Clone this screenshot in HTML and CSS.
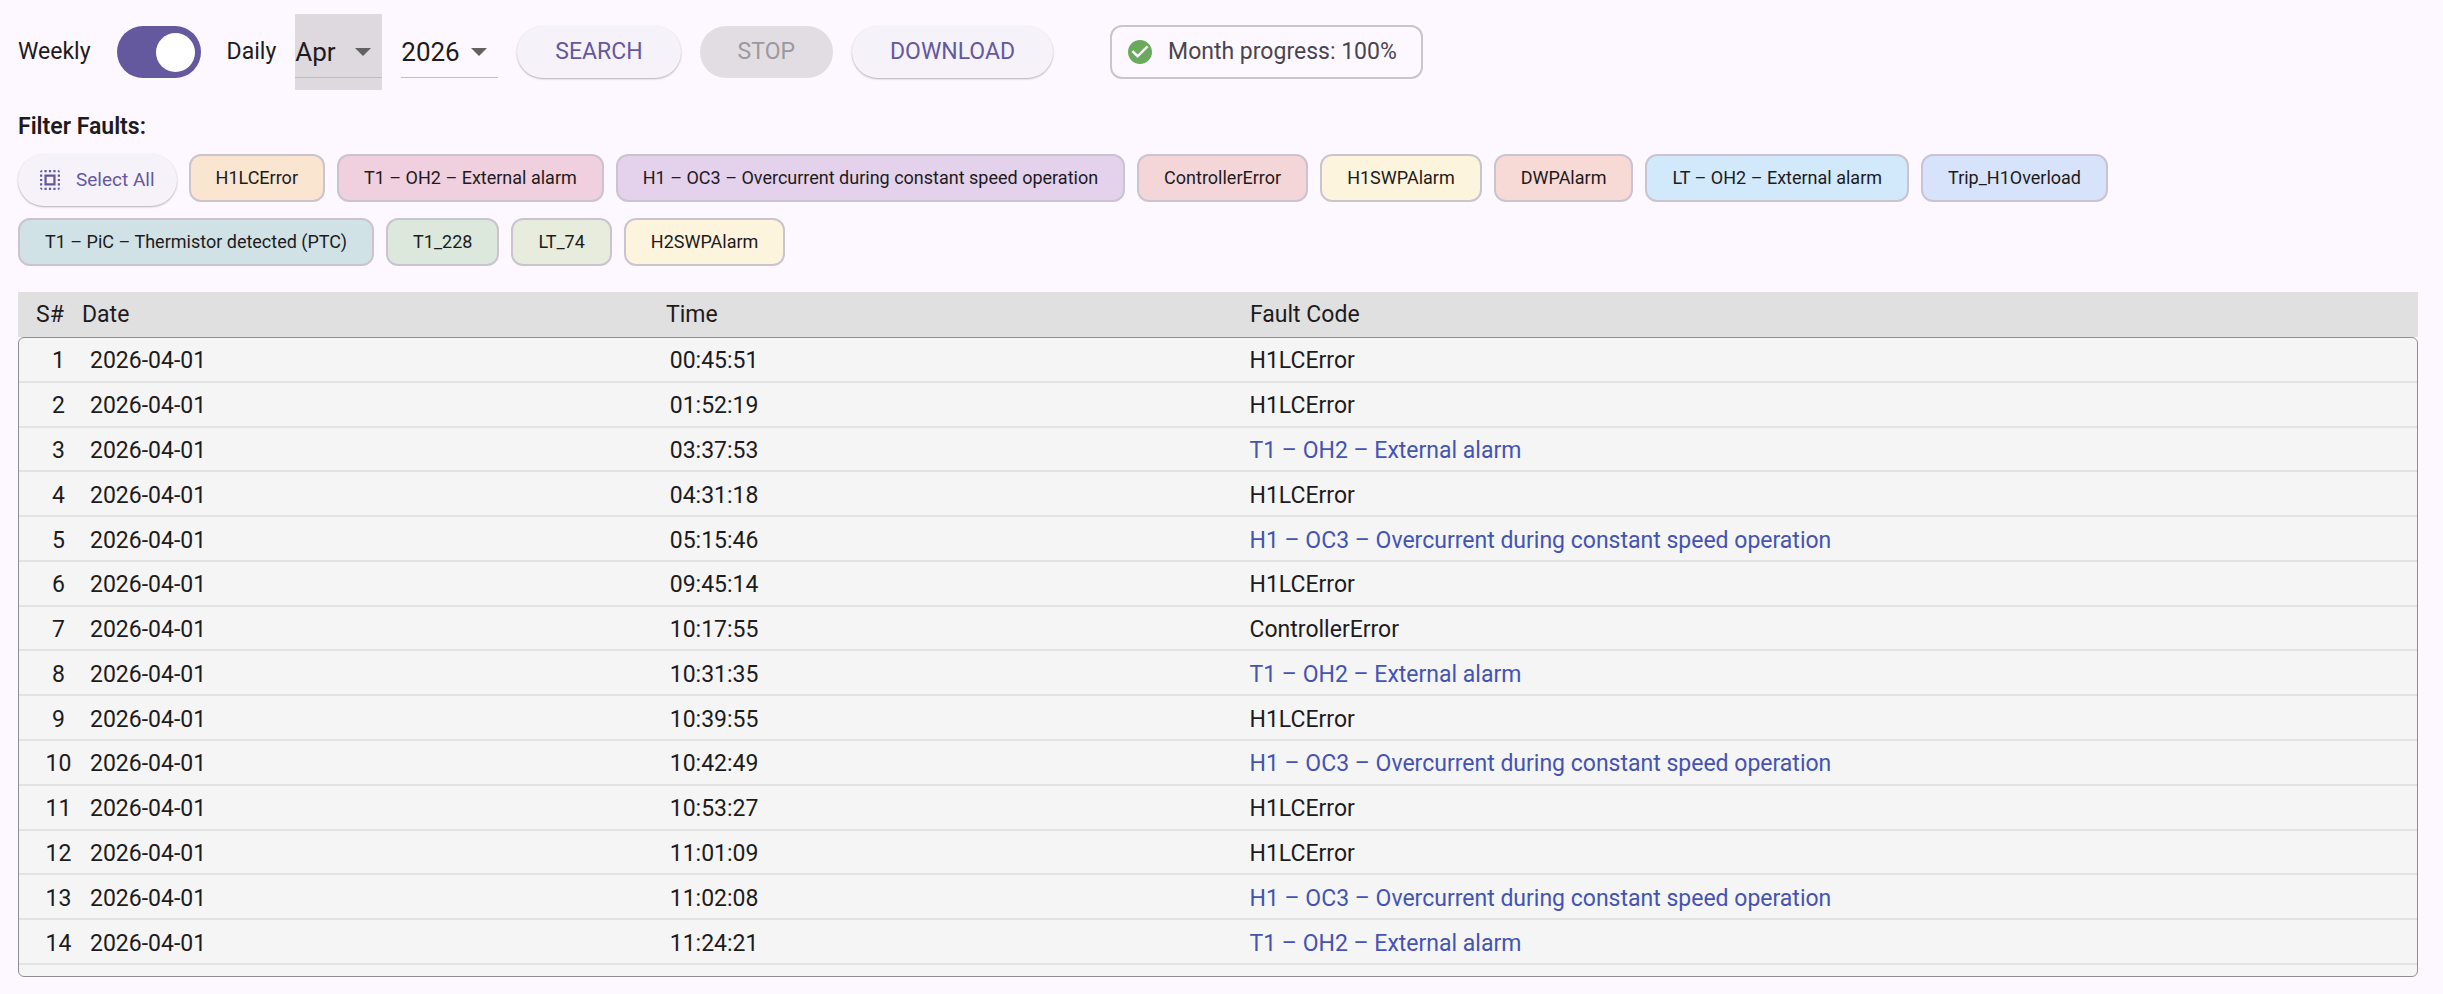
FILE: index.html
```html
<!DOCTYPE html>
<html lang="en">
<head>
<meta charset="utf-8">
<meta name="viewport" content="width=device-width, initial-scale=1">
<title>Fault Log</title>
<link rel="stylesheet" href="styles.css">
</head>
<body>
<main class="page">
  <form class="toolbar">
    <div class="mode">
      <label for="mode">Weekly</label>
      <input class="switch" type="checkbox" role="switch" id="mode" checked>
      <label for="mode">Daily</label>
    </div>
    <div class="picker picker-active">
      <select class="picker-select" aria-label="Month"><option>Apr</option></select>
      <svg class="picker-arrow" viewBox="0 0 16 8" aria-hidden="true"><path d="M0 0h16l-8 8z"/></svg>
    </div>
    <div class="picker picker-year">
      <select class="picker-select" aria-label="Year"><option>2026</option></select>
      <svg class="picker-arrow" viewBox="0 0 16 8" aria-hidden="true"><path d="M0 0h16l-8 8z"/></svg>
    </div>
    <button class="button" type="button">SEARCH</button>
    <button class="button" type="button" disabled>STOP</button>
    <button class="button" type="button">DOWNLOAD</button>
    <div class="status" role="status">
      <svg class="status-icon" viewBox="2 2 20 20" aria-hidden="true"><path d="M12 2C6.48 2 2 6.48 2 12s4.48 10 10 10 10-4.48 10-10S17.52 2 12 2zm-2 15l-5-5 1.41-1.41L10 14.17l7.59-7.59L19 8l-9 9z"/></svg>
      Month progress: 100%
    </div>
  </form>

  <h2 class="filter-title">Filter Faults:</h2>
  <div class="chips">
    <button class="select-all" type="button">
      <svg class="select-icon" viewBox="3 3 18 18" aria-hidden="true"><path d="M3 5h2V3c-1.1 0-2 .9-2 2zm0 8h2v-2H3v2zm4 8h2v-2H7v2zM3 9h2V7H3v2zm10-6h-2v2h2V3zm6 0v2h2c0-1.1-.9-2-2-2zM5 21v-2H3c0 1.100.9 2 2 2zm-2-4h2v-2H3v2zM9 3H7v2h2V3zm2 18h2v-2h-2v2zm8-8h2v-2h-2v2zm0 8c1.100 0 2-.9 2-2h-2v2zm0-12h2V7h-2v2zm0 8h2v-2h-2v2zm-4 4h2v-2h-2v2zm0-16h2V3h-2v2zM7 17h10V7H7v10zm2-8h6v6H9V9z"/></svg>
      Select All
    </button>
    <button class="chip chip-orange" type="button">H1LCError</button>
    <button class="chip chip-pink" type="button">T1 – OH2 – External alarm</button>
    <button class="chip chip-purple" type="button">H1 – OC3 – Overcurrent during constant speed operation</button>
    <button class="chip chip-red" type="button">ControllerError</button>
    <button class="chip chip-yellow" type="button">H1SWPAlarm</button>
    <button class="chip chip-coral" type="button">DWPAlarm</button>
    <button class="chip chip-sky" type="button">LT – OH2 – External alarm</button>
    <button class="chip chip-blue" type="button">Trip_H1Overload</button>
    <button class="chip chip-teal" type="button">T1 – PiC – Thermistor detected (PTC)</button>
    <button class="chip chip-green" type="button">T1_228</button>
    <button class="chip chip-lime" type="button">LT_74</button>
    <button class="chip chip-yellow" type="button">H2SWPAlarm</button>
  </div>

  <table class="log">
    <thead class="log-head">
      <tr class="log-row"><th>S#</th><th>Date</th><th>Time</th><th>Fault Code</th></tr>
    </thead>
    <tbody class="log-body">
      <tr class="log-row"><td>1</td><td>2026-04-01</td><td>00:45:51</td><td>H1LCError</td></tr>
      <tr class="log-row"><td>2</td><td>2026-04-01</td><td>01:52:19</td><td>H1LCError</td></tr>
      <tr class="log-row"><td>3</td><td>2026-04-01</td><td>03:37:53</td><td><a class="fault-link" href="#">T1 – OH2 – External alarm</a></td></tr>
      <tr class="log-row"><td>4</td><td>2026-04-01</td><td>04:31:18</td><td>H1LCError</td></tr>
      <tr class="log-row"><td>5</td><td>2026-04-01</td><td>05:15:46</td><td><a class="fault-link" href="#">H1 – OC3 – Overcurrent during constant speed operation</a></td></tr>
      <tr class="log-row"><td>6</td><td>2026-04-01</td><td>09:45:14</td><td>H1LCError</td></tr>
      <tr class="log-row"><td>7</td><td>2026-04-01</td><td>10:17:55</td><td>ControllerError</td></tr>
      <tr class="log-row"><td>8</td><td>2026-04-01</td><td>10:31:35</td><td><a class="fault-link" href="#">T1 – OH2 – External alarm</a></td></tr>
      <tr class="log-row"><td>9</td><td>2026-04-01</td><td>10:39:55</td><td>H1LCError</td></tr>
      <tr class="log-row"><td>10</td><td>2026-04-01</td><td>10:42:49</td><td><a class="fault-link" href="#">H1 – OC3 – Overcurrent during constant speed operation</a></td></tr>
      <tr class="log-row"><td>11</td><td>2026-04-01</td><td>10:53:27</td><td>H1LCError</td></tr>
      <tr class="log-row"><td>12</td><td>2026-04-01</td><td>11:01:09</td><td>H1LCError</td></tr>
      <tr class="log-row"><td>13</td><td>2026-04-01</td><td>11:02:08</td><td><a class="fault-link" href="#">H1 – OC3 – Overcurrent during constant speed operation</a></td></tr>
      <tr class="log-row"><td>14</td><td>2026-04-01</td><td>11:24:21</td><td><a class="fault-link" href="#">T1 – OH2 – External alarm</a></td></tr>
    </tbody>
  </table>
</main>
</body>
</html>
```
FILE: styles.css
```css
* {
  box-sizing: border-box;
}

body {
  margin: 0;
  background: #fdf8ff;
  color: #1d1b20;
  font: 400 23px/26px Roboto, sans-serif;
}

button,
select {
  margin: 0;
  border: 0;
  font: inherit;
  white-space: nowrap;
}

.page {
  display: flex;
  flex-direction: column;
  min-height: 100vh;
  padding: 14px 25px 17px 18px;
}

/* Toolbar */

.toolbar {
  display: flex;
  flex-wrap: wrap;
  align-items: center;
  gap: 19px;
}

.mode {
  display: flex;
  align-items: center;
  gap: 26px;
}

.switch {
  appearance: none;
  display: flex;
  align-items: center;
  width: 84px;
  height: 52px;
  margin: 0;
  padding: 0 6px;
  border-radius: 26px;
  background: #cac4d0;
}

.switch::before {
  content: "";
  width: 39px;
  height: 39px;
  border-radius: 50%;
  background: #fff;
}

.switch:checked {
  justify-content: flex-end;
  background: #64589f;
}

.picker {
  position: relative;
  display: flex;
  align-items: center;
  width: 87px;
  height: 76px;
}

.picker-active {
  background: #ded9df;
}

.picker-year {
  width: 97px;
}

.picker-select {
  appearance: none;
  width: 100%;
  height: 52px;
  padding: 0;
  border-bottom: 1px solid #c2bdc5;
  border-radius: 0;
  background: transparent;
  color: inherit;
  font-size: 26px;
  line-height: 30px;
}

.picker-arrow {
  position: absolute;
  top: 34px;
  right: 11px;
  width: 16px;
  height: 8px;
  fill: #616161;
  pointer-events: none;
}

.button {
  height: 52px;
  padding: 0 38px;
  border-radius: 26px;
  background: #f5f2fa;
  box-shadow: 0 1px 2px rgba(0, 0, 0, 0.3);
  color: #64589f;
}

.button:disabled {
  background: #e2dde3;
  box-shadow: none;
  color: #9c989e;
}

.status {
  display: flex;
  align-items: center;
  gap: 16px;
  height: 54px;
  margin-left: 38px;
  padding: 0 24px 0 16px;
  border: 2px solid #cac4d0;
  border-radius: 12px;
  color: #49454f;
}

.status-icon {
  width: 24px;
  height: 24px;
  fill: #6aaa5c;
}

/* Fault filters */

.filter-title {
  margin: 24px 0 14px;
  font-size: 23px;
  font-weight: 600;
  line-height: 26px;
}

.chips {
  display: flex;
  flex-wrap: wrap;
  align-items: flex-start;
  gap: 12px;
  margin-bottom: 26px;
  font-size: 18px;
}

.select-all {
  display: flex;
  align-items: center;
  gap: 16px;
  height: 52px;
  padding: 0 22px;
  border-radius: 26px;
  background: #f5f2fa;
  box-shadow: 0 1px 2px rgba(0, 0, 0, 0.3);
  color: #64589f;
  font-size: 19px;
}

.select-icon {
  width: 20px;
  height: 20px;
  fill: currentColor;
}

.chip {
  height: 48px;
  padding: 0 25px;
  border: 2px solid #cac4d0;
  border-radius: 12px;
  color: #1d1b20;
}

.chip-orange { background: #fae5d0; }
.chip-pink { background: #f0cfdf; }
.chip-purple { background: #e4d1ec; }
.chip-red { background: #f4d6d8; }
.chip-yellow { background: #fcf4dc; }
.chip-coral { background: #f7dad5; }
.chip-sky { background: #d2e8fb; }
.chip-blue { background: #d6e3fb; }
.chip-teal { background: #d0e2e6; }
.chip-green { background: #dce8dc; }
.chip-lime { background: #e7ecdc; }

/* Fault table */

.log {
  display: flex;
  flex: 1;
  flex-direction: column;
}

.log-head {
  display: block;
  background: #e0e0e0;
}

.log-row {
  display: grid;
  grid-template-columns: 63px 1fr 1fr 2fr;
  align-items: center;
}

.log-head .log-row {
  grid-template-columns: 64px 1fr 1fr 2fr;
  height: 45px;
}

.log-row th,
.log-row td {
  padding: 0;
  font-weight: 400;
  text-align: left;
}

.log-head th:first-child {
  padding-left: 18px;
}

.log-body {
  display: grid;
  flex: 1;
  grid-auto-rows: 1fr;
  padding-bottom: 11px;
  border: 1px solid #8f8f8f;
  border-radius: 6px;
  background: #f5f5f5;
}

.log-body .log-row {
  padding: 4px 8px 0;
  border-bottom: 2px solid #e2e2e2;
}

.log-body td:first-child {
  text-align: center;
}

.fault-link {
  color: #4453b4;
  text-decoration: none;
}
```
